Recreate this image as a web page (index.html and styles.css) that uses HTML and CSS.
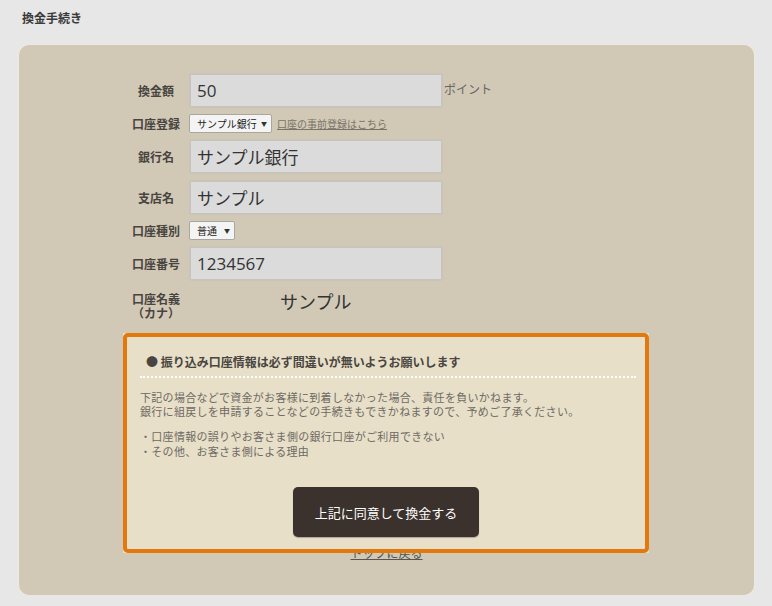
FILE: index.html
```html
<!DOCTYPE html>
<html lang="ja">
<head>
<meta charset="utf-8">
<title>換金手続き</title>
<link rel="stylesheet" href="styles.css">
</head>
<body>
<header class="page-head">
  <h1 class="page-title">換金手続き</h1>
</header>
<main class="panel">
  <form class="form">
    <div class="row">
      <span class="label">換金額</span>
      <input class="field" type="text" value="50">
      <span class="unit">ポイント</span>
    </div>
    <div class="row">
      <span class="label">口座登録</span>
      <span class="select select-bank">サンプル銀行<span class="caret">▼</span></span>
      <a class="small-link" href="#">口座の事前登録はこちら</a>
    </div>
    <div class="row">
      <span class="label">銀行名</span>
      <input class="field" type="text" value="サンプル銀行">
    </div>
    <div class="row">
      <span class="label">支店名</span>
      <input class="field" type="text" value="サンプル">
    </div>
    <div class="row">
      <span class="label">口座種別</span>
      <span class="select select-type">普通<span class="caret">▼</span></span>
    </div>
    <div class="row">
      <span class="label">口座番号</span>
      <input class="field" type="text" value="1234567">
    </div>
    <div class="row row-name">
      <span class="label label-two"><span class="label-line">口座名義</span><span class="label-line">（カナ）</span></span>
      <span class="name-value">サンプル</span>
    </div>
  </form>

  <section class="notice">
    <h2 class="notice-title">●&nbsp;振り込み口座情報は必ず間違いが無いようお願いします</h2>
    <div class="notice-text">
      <p class="line">下記の場合などで資金がお客様に到着しなかった場合、責任を負いかねます。</p>
      <p class="line">銀行に組戻しを申請することなどの手続きもできかねますので、予めご了承ください。</p>
    </div>
    <div class="notice-text notice-list">
      <p class="line">・口座情報の誤りやお客さま側の銀行口座がご利用できない</p>
      <p class="line">・その他、お客さま側による理由</p>
    </div>
    <div class="btn-wrap">
      <button class="btn" type="button">上記に同意して換金する</button>
    </div>
    <div class="highlight"></div>
  </section>
  <div class="back">
    <a class="back-link" href="#">トップに戻る</a>
  </div>
</main>
</body>
</html>
```

FILE: styles.css
```css
* { box-sizing: border-box; }

body {
  margin: 0;
  background: #e7e7e7;
  font-family: "Noto Sans CJK JP", sans-serif;
  color: #444;
}

.page-head {
  height: 45px;
  padding: 10px 0 0 22px;
}

.page-title {
  margin: 0;
  font-size: 12px;
  line-height: 16px;
  font-weight: bold;
  color: #3a3a3a;
}

.panel {
  margin: 0 18px 0 19px;
  width: 735px;
  height: 550px;
  background: #d1c9b6;
  border-radius: 10px;
  box-shadow: 0 0 0 1px #ece9e2;
  padding: 28px 0 0 0;
}

.form {
  display: flex;
  flex-direction: column;
  gap: 6px;
  padding-left: 107px;
}

.row {
  display: flex;
  align-items: center;
}

.label {
  width: 60px;
  margin-right: 3px;
  text-align: center;
  font-size: 12px;
  line-height: 14px;
  font-weight: bold;
  color: #484440;
}

.field {
  width: 254px;
  height: 35px;
  margin: 0;
  padding: 0 6px;
  border: 2px solid #c8c4bb;
  border-radius: 2px;
  background: #dbdbdb;
  font-family: "Open Sans", "Noto Sans CJK JP", sans-serif;
  font-size: 17px;
  color: #333;
  outline: none;
}

.unit {
  font-size: 12px;
  color: #666;
  margin-left: 1px;
  align-self: flex-start;
  margin-top: 7px;
}

.select {
  display: inline-flex;
  align-items: center;
  height: 19px;
  padding: 0 4px 0 7px;
  border: 1px solid #a9a6a0;
  border-radius: 2px;
  background: #f4f4f4;
  font-size: 10px;
  white-space: nowrap;
  color: #222;
}

.select-bank { width: 83px; }
.select-type { width: 46px; }

.caret {
  margin-left: auto;
  font-size: 6px;
  color: #333;
}

.small-link {
  margin-left: 5px;
  font-size: 10px;
  color: #7a7366;
  text-decoration: underline;
}

.row-name {
  align-items: flex-start;
  margin-top: 5px;
}

.label-two {
  display: flex;
  flex-direction: column;
  align-items: center;
}

.label-line {
  display: block;
  height: 14px;
  line-height: 14px;
}

.name-value {
  padding-left: 91px;
  padding-top: 1px;
  font-size: 18px;
  line-height: 16px;
  color: #333;
}

.notice {
  position: relative;
  margin: 13px 0 0 104px;
  width: 526px;
  height: 220px;
  background: #e7dfc8;
  padding: 21px 13px 0 17px;
}

.notice-title {
  margin: 0 0 6px 0;
  padding-left: 6px;
  padding-bottom: 6px;
  border-bottom: 2px dotted #ffffff;
  font-size: 12px;
  line-height: 16px;
  font-weight: bold;
  color: #4a4540;
}

.notice-text {
  margin: 12px 0 0 0;
  font-size: 11px;
  letter-spacing: 0.3px;
  color: #6e6a64;
}

.line {
  margin: 0;
  height: 14px;
  line-height: 14px;
  white-space: nowrap;
}

.notice-list {
  margin-top: 11px;
}

.notice-list .line + .line {
  margin-top: 1px;
}

.btn-wrap {
  display: flex;
  justify-content: center;
  margin-top: 29px;
  margin-left: -4px;
}

.btn {
  width: 186px;
  height: 50px;
  border: none;
  border-radius: 5px;
  background: #3b322d;
  box-shadow: 0 1px 1px rgba(0,0,0,0.25);
  color: #fff;
  font-family: "Noto Sans CJK JP", sans-serif;
  font-size: 13px;
}

.highlight {
  position: absolute;
  inset: 0;
  border: 4px solid #e3780c;
  border-radius: 5px;
  z-index: 1;
}

.back {
  text-align: center;
  margin-top: -7px;
  font-size: 12px;
  line-height: 14px;
}

.back-link {
  font-size: 12px;
  line-height: 14px;
  color: #555;
  text-decoration: underline;
}
```
